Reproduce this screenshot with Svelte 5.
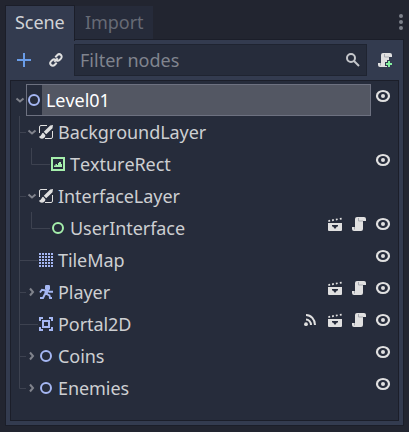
<script>
  const rows = [
    { name: 'Level01', depth: 0, icon: 'node', arrow: 'down', actions: ['eye'], selected: true },
    { name: 'BackgroundLayer', depth: 1, icon: 'canvas', arrow: 'down', actions: [] },
    { name: 'TextureRect', depth: 2, icon: 'texture', actions: ['eye'] },
    { name: 'InterfaceLayer', depth: 1, icon: 'canvas', arrow: 'down', actions: [] },
    { name: 'UserInterface', depth: 2, icon: 'control', actions: ['scene', 'script', 'eye'] },
    { name: 'TileMap', depth: 1, icon: 'tiles', actions: ['eye'] },
    { name: 'Player', depth: 1, icon: 'player', arrow: 'right', actions: ['scene', 'script', 'eye'] },
    { name: 'Portal2D', depth: 1, icon: 'portal', actions: ['signal', 'scene', 'script', 'eye'] },
    { name: 'Coins', depth: 1, icon: 'node', arrow: 'right', actions: ['eye'] },
    { name: 'Enemies', depth: 1, icon: 'node', arrow: 'right', actions: ['eye'], last: true }
  ];
  const indent = [15, 27, 39];
  const grid = [1, 4, 7, 10, 13];

  function guides(row) {
    if (row.depth === 0) return '';
    let d = row.last ? 'M8.5 0V16.5' : 'M8.5 0V32';
    if (row.depth === 1) d += row.arrow ? 'M8.5 16.5H15' : 'M8.5 16.5H27';
    else d += 'M20.5 0V16.5H39';
    return d;
  }
</script>

{#snippet glyph(kind)}
  <svg class="icon" width="16" height="16" viewBox="0 0 16 16">
    {#if kind === 'node' || kind === 'control'}
      <circle cx="8" cy="8" r="5" fill="none" stroke={kind === 'node' ? '#a5b7f3' : '#a5efac'} stroke-width="2" />
    {:else if kind === 'canvas'}
      <path d="M9 1.500H3a1.500 1.500 0 0 0-1.500 1.500V9M14.500 7v6a1.500 1.500 0 0 1-1.500 1.500H7" fill="none" stroke="#e0e0e0" />
      <path d="M15 1 12.200 1.500 5.800 7.800l2.400 2.500 6.300-6.100zM5.200 8.800C3.400 9.100 4 11.700 1 12.700c1 3 6.400 2.500 6.400-1.500z" fill="#e0e0e0" />
    {:else if kind === 'texture'}
      <path d="M2 2h12v12H2z" fill="none" stroke="#a5efac" stroke-width="2" />
      <path d="M4 11V9.500h1.500V8H7v1h1V7h1V6h2v2h1v3z" fill="#a5efac" />
    {:else if kind === 'tiles'}
      {#each grid as y}
        {#each grid as x}
          <rect {x} {y} width="2" height="2" fill="#a5b7f3" />
        {/each}
      {/each}
    {:else if kind === 'player'}
      <rect x="7" y="1" width="5" height="5" rx="1.200" fill="#a5b7f3" />
      <path d="M7 6h3.500l-1 5H6z" fill="#a5b7f3" />
      <path d="M7.500 6.500 4 5.800 2 8.500M9.500 6.500l1.700 1.300H15M7 10l-2 4H2M8.500 10l3 1.500L12 14h2" fill="none" stroke="#a5b7f3" stroke-width="1.900" />
    {:else if kind === 'portal'}
      <path d="M5 5h6v6H5zM2 5V2h3M11 2h3v3M14 11v3h-3M5 14H2v-3" fill="none" stroke="#a5b7f3" stroke-width="2" />
    {:else if kind === 'eye'}
      <ellipse cx="8" cy="8" rx="6" ry="5" fill="none" stroke="#e0e0e0" stroke-width="2.200" />
      <circle cx="8" cy="8" r="2" fill="#e0e0e0" />
    {:else if kind === 'scene'}
      <path d="M1 7h14v7a1 1 0 0 1-1 1H2a1 1 0 0 1-1-1zM5 9v1.500h1L8 13l2-2.500h1V9z" fill="#e0e0e0" fill-rule="evenodd" />
      <path d="M1.200 4.200l1.800-.4.300 1.700-1.800.4zM4.900 3.500l1.800-.4.300 1.700-1.800.4zM8.700 2.800l1.800-.4.300 1.700-1.800.4zM12.700 2.100l1.800-.4.300 1.700-1.800.4z" fill="#e0e0e0" />
    {:else if kind === 'script' || kind === 'script-add'}
      <path d="M6 1a2 2 0 0 0-2 2v8H1v2a2 2 0 0 0 2 2h7a2 2 0 0 0 2-2V5h3V3a2 2 0 0 0-2-2z" fill="#e0e0e0" />
      <path d="M3.500 11v2.500M7.500 2v3H12" fill="none" stroke="#a8abb1" />
      {#if kind === 'script-add'}
        <path d="M10 8h4v2h2v4h-2v2h-4v-2H8v-4h2z" fill="#333b4f" />
        <path d="M11 9h2v2h2v2h-2v2h-2v-2H9v-2h2z" fill="#84f0a0" />
      {/if}
    {:else if kind === 'signal'}
      <circle cx="3" cy="12.200" r="1.900" fill="#e0e0e0" />
      <path d="M3 7.500a5 5.500 0 0 1 5 5.500M3 3a9 10 0 0 1 9 10" fill="none" stroke="#e0e0e0" stroke-width="2" />
    {:else if kind === 'plus'}
      <path d="M8 1v14M1 8h14" stroke="#699ce8" stroke-width="2" />
    {:else if kind === 'link'}
      <g transform="rotate(-45 8 8)" fill="none" stroke="#e0e0e0" stroke-width="2">
        <path d="M6.500 10.500H3.500a2.500 2.500 0 0 1 0-5h2a2.500 2.500 0 0 1 2.300 1.800M9.500 5.500h3a2.500 2.500 0 0 1 0 5h-2a2.500 2.500 0 0 1-2.300-1.800M5.500 8h5" />
      </g>
    {:else if kind === 'search'}
      <circle cx="6" cy="6" r="4" fill="none" stroke="#c5c7cb" stroke-width="2" />
      <path d="m9 9 5 5" stroke="#c5c7cb" stroke-width="2" />
    {/if}
  </svg>
{/snippet}

<div class="dock">
  <header>
    <div class="tab active">Scene</div>
    <div class="tab">Import</div>
    <svg class="dots" width="4" height="16" viewBox="0 0 4 16" fill="#7d818b">
      <circle cx="2" cy="2" r="2" /><circle cx="2" cy="8" r="2" /><circle cx="2" cy="14" r="2" />
    </svg>
  </header>
  <section class="panel">
    <div class="toolbar">
      {@render glyph('plus')}
      {@render glyph('link')}
      <div class="filter"><span>Filter nodes</span>{@render glyph('search')}</div>
      {@render glyph('script-add')}
    </div>
    <div class="tree">
      {#each rows as row}
        <div class="row">
          <svg class="guide" width={indent[row.depth]} height="32">
            <path d={guides(row)} fill="none" stroke="#3d4250" />
            {#if row.arrow === 'down'}
              <path d={row.depth ? 'M17.500 14.500l3.500 3 3.500-3' : 'M5.500 14.500l3.500 3 3.500-3'} fill="none" stroke="#80838c" stroke-width="2" />
            {:else if row.arrow === 'right'}
              <path d="M19 12.500l3 3.500-3 3.500" fill="none" stroke="#80838c" stroke-width="2" />
            {/if}
          </svg>
          <div class="item" class:selected={row.selected}>
            <div class="type">{@render glyph(row.icon)}</div>
            <div class="name">{row.name}</div>
          </div>
          <div class="actions">
            {#each row.actions as action}{@render glyph(action)}{/each}
          </div>
        </div>
      {/each}
    </div>
  </section>
</div>

<style>
  :global(body) { margin: 0; background: #222530; }
  .dock {
    box-sizing: border-box;
    width: 409px;
    height: 432px;
    padding: 5px 5px 6px;
    display: flex;
    flex-direction: column;
    background: #222530;
    font: 18px/32px "Noto Sans", sans-serif;
    font-kerning: none;
    color: #cdcfd2;
  }
  .icon, .guide, .dots { display: block; flex: none; }
  header { display: flex; height: 34px; }
  .tab {
    box-sizing: border-box;
    width: 78px;
    margin-top: 1px;
    padding-left: 10px;
    background: #262b3a;
    color: #666a75;
    letter-spacing: -0.05px;
  }
  .tab.active {
    position: relative;
    width: 70px;
    height: 36px;
    margin-top: 0;
    padding-left: 9px;
    border: solid #1b1e29;
    border-width: 1px 1px 0;
    background: #333b4f;
    color: #d0d2d6;
  }
  .dots { margin: 9px 0 0 auto; transform: translateX(-1px); }
  .panel {
    box-sizing: border-box;
    flex: 1;
    padding: 4px;
    border: 1px solid #1b1e29;
    background: #333b4f;
  }
  .toolbar { display: flex; align-items: center; height: 32px; padding-left: 6px; }
  .toolbar > :global(.icon:nth-child(2)) { margin-left: 16px; }
  .toolbar > :global(.icon:last-child) { margin-left: 10px; }
  .filter {
    box-sizing: border-box;
    width: 293px;
    height: 32px;
    margin-left: 10px;
    padding: 0 5px;
    display: flex;
    align-items: center;
    justify-content: space-between;
    border: 1px solid #1f2431;
    background: #262c3b;
    color: #80848e;
  }
  .tree {
    box-sizing: border-box;
    height: 341px;
    margin-top: 4px;
    padding: 3px 0 0;
    border: 1px solid #1b1e29;
    background: #262c3b;
  }
  .row { display: flex; height: 32px; }
  .item { box-sizing: border-box; display: flex; flex: 1; }
  .type { display: flex; align-items: center; width: 20px; }
  .name { letter-spacing: -0.06px; }
  .selected {
    flex: none;
    width: 345px;
    border: 1px solid #6d7180;
    background: #535763;
    line-height: 30px;
    color: #fff;
  }
  .selected .type { width: 15px; margin-right: 4px; background: #262c3b; }
  .selected .type :global(.icon) { margin-left: -1px; }
  .actions { display: flex; gap: 8px; padding: 4px 7px 0 0; margin-left: auto; }
</style>
